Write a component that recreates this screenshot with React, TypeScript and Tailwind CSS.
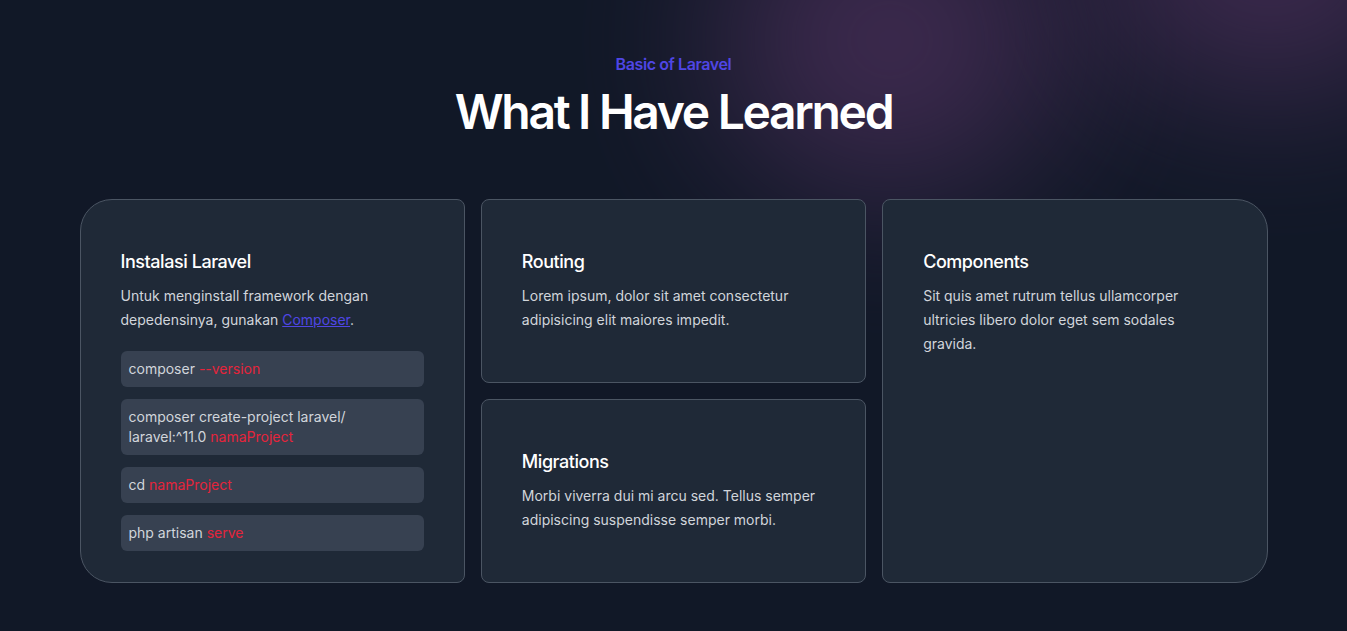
const steps = [
  { cmd: 'composer', arg: '--version' },
  { cmd: 'composer create-project laravel/ laravel:^11.0', arg: 'namaProject' },
  { cmd: 'cd', arg: 'namaProject' },
  { cmd: 'php artisan', arg: 'serve' },
];

function Card({ title, text, className }: { title: string; text: string; className: string }) {
  return (
    <div className={`border border-[#4b5563] bg-[#1f2937] px-10 pt-12 pb-8 ${className}`}>
      <h3 className="text-lg leading-7 font-medium text-white tracking-tight">{title}</h3>
      <p className="mt-2 text-sm leading-6 text-[#d1d5db]">{text}</p>
    </div>
  );
}

export default function App() {
  return (
    <div
      className="relative min-h-[631px] overflow-hidden bg-[#111827] text-white"
      style={{ fontFamily: 'Inter, "Noto Sans", sans-serif' }}
    >
      {/* Glow */}
      <div className="pointer-events-none absolute left-[720px] top-[-110px] h-[300px] w-[340px] rounded-full bg-[#74407f] opacity-45 blur-[80px]" />
      <div className="pointer-events-none absolute left-[1100px] top-[-170px] h-[260px] w-[340px] rounded-full bg-[#74407f] opacity-45 blur-[80px]" />

      <div className="relative mx-auto w-[1188px] pt-[52px] pb-12">
        <div className="text-center">
          <p className="text-base leading-6 font-semibold text-[#4f46e5] tracking-tight">Basic of Laravel</p>
          <h2 className="mt-3 text-5xl leading-[48px] font-semibold tracking-[-0.048em] text-white">What I Have Learned</h2>
        </div>

        <div className="mt-[63px] grid grid-cols-3 gap-4">
          <div className="rounded-lg rounded-l-[2rem] border border-[#4b5563] bg-[#1f2937] px-10 pt-12 pb-[31px]">
            <h3 className="text-lg leading-7 font-medium text-white tracking-tight">Instalasi Laravel</h3>
            <p className="mt-2 text-sm leading-6 text-[#d1d5db]">
              Untuk menginstall framework dengan depedensinya, gunakan{' '}
              <a href="#" className="text-[#4f46e5] underline">Composer</a>.
            </p>
            <div className="mt-[19px] flex flex-col gap-3">
              {steps.map((s) => (
                <div key={s.arg + s.cmd} className="rounded-md bg-[#374151] px-2 py-2 text-sm leading-5 text-[#d1d5db]">
                  {s.cmd} <span className="text-[#e5243b]">{s.arg}</span>
                </div>
              ))}
            </div>
          </div>

          <div className="grid grid-rows-2 gap-4">
            <Card
              className="rounded-lg"
              title="Routing"
              text="Lorem ipsum, dolor sit amet consectetur adipisicing elit maiores impedit."
            />
            <Card
              className="rounded-lg"
              title="Migrations"
              text="Morbi viverra dui mi arcu sed. Tellus semper adipiscing suspendisse semper morbi."
            />
          </div>

          <Card
            className="rounded-lg rounded-r-[2rem] pr-20"
            title="Components"
            text="Sit quis amet rutrum tellus ullamcorper ultricies libero dolor eget sem sodales gravida."
          />
        </div>
      </div>
    </div>
  );
}
